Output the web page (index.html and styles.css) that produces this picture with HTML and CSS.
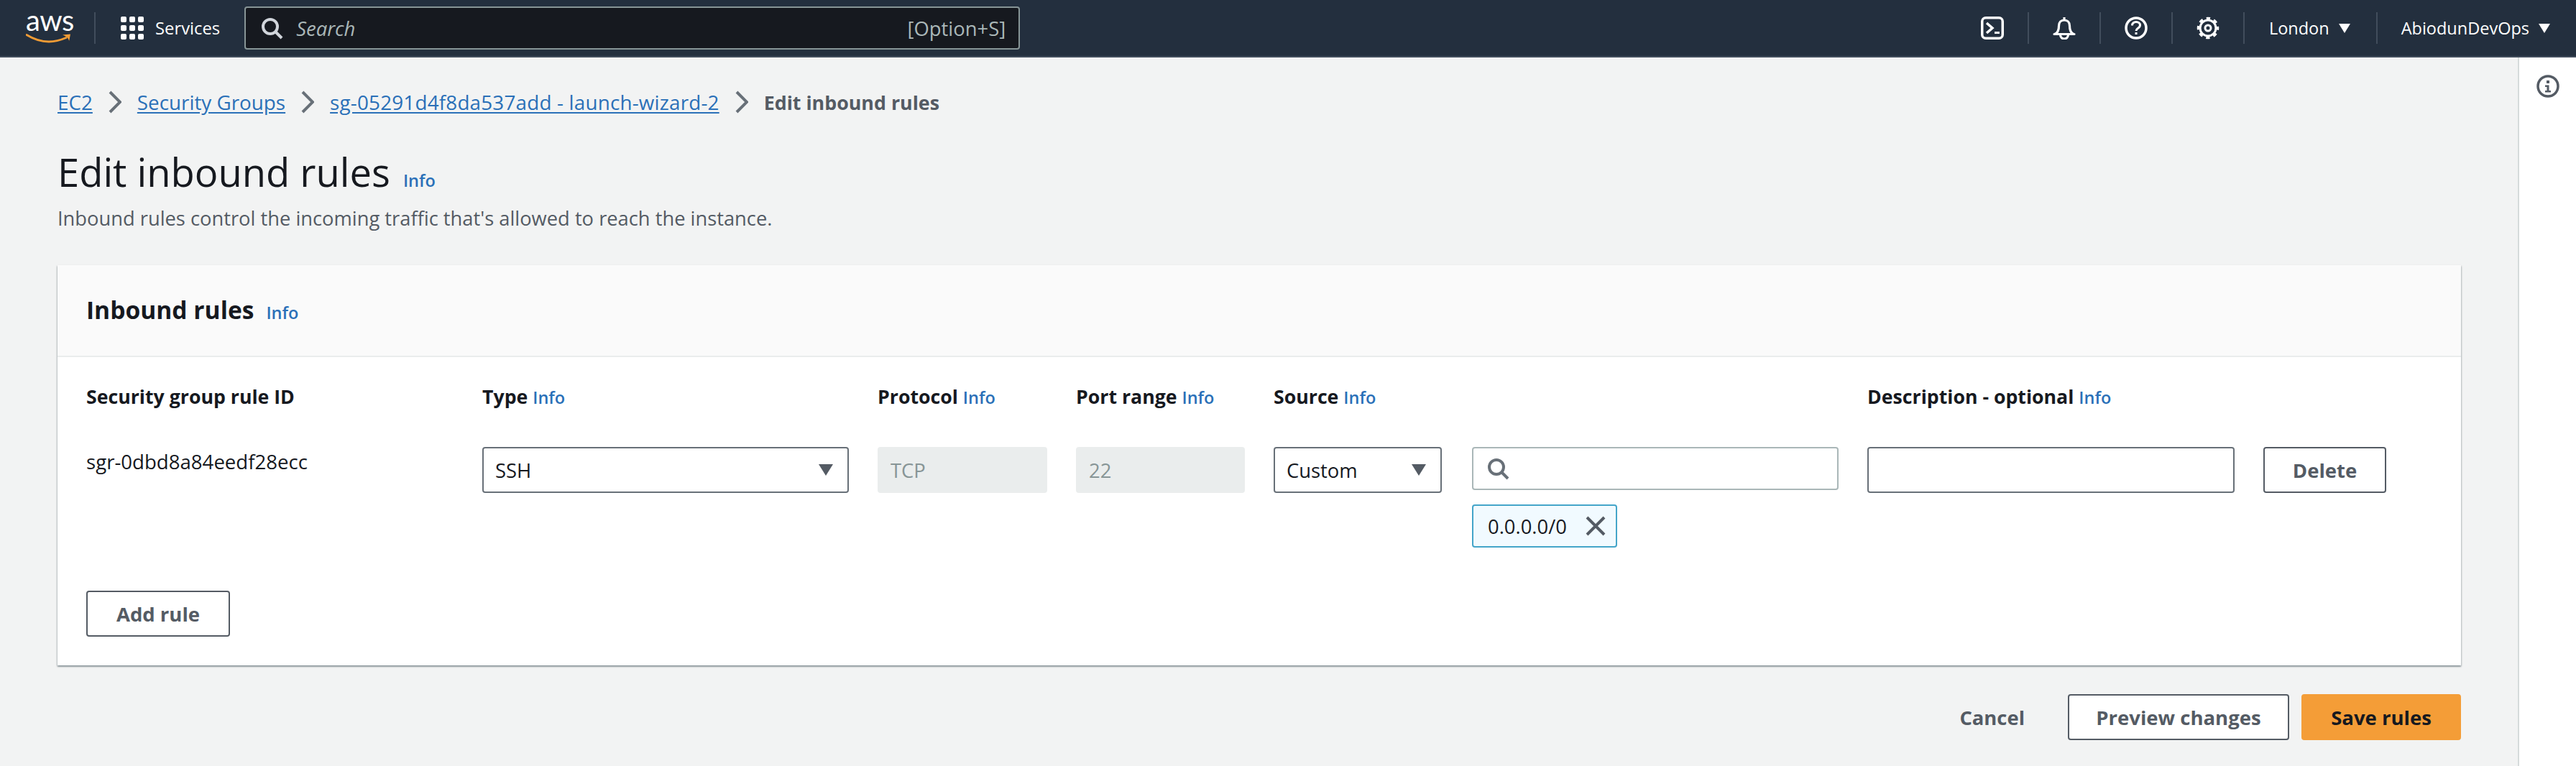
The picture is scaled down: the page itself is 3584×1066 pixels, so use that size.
FILE: index.html
```html
<!DOCTYPE html>
<html lang="en">
<head>
<meta charset="utf-8">
<title>Edit inbound rules</title>
<link rel="stylesheet" href="styles.css">
</head>
<body>
<header class="topnav">
  <div class="logo">
    <span class="logo-text">aws</span>
    <svg class="logo-smile" viewBox="0 0 64 14"><path d="M1 2.500C10 8 20 12 32 12c9 0 17-2.500 24-5.500" fill="none" stroke="#f29c35" stroke-width="2.800" stroke-linecap="round"/><path d="M51 2.500l11-1-1.800 9.500c-.8-3-2.500-6-9.200-8.500z" fill="#f29c35"/></svg>
  </div>
  <span class="nav-div nav-div-first"></span>
  <div class="services">
    <svg class="grid-icon" viewBox="0 0 32 32"><g fill="#fff"><rect x="0" y="0" width="8" height="8" rx="2"/><rect x="12" y="0" width="8" height="8" rx="2"/><rect x="24" y="0" width="8" height="8" rx="2"/><rect x="0" y="12" width="8" height="8" rx="2"/><rect x="12" y="12" width="8" height="8" rx="2"/><rect x="24" y="12" width="8" height="8" rx="2"/><rect x="0" y="24" width="8" height="8" rx="2"/><rect x="12" y="24" width="8" height="8" rx="2"/><rect x="24" y="24" width="8" height="8" rx="2"/></g></svg>
    <span class="services-text">Services</span>
  </div>
  <div class="searchbar">
    <svg class="icon-32" viewBox="0 0 32 32"><circle cx="14" cy="14" r="10" fill="none" stroke="#d1d5db" stroke-width="4"/><path d="M21 21l9 9" stroke="#d1d5db" stroke-width="4"/></svg>
    <span class="search-ph">Search</span>
    <span class="search-key">[Option+S]</span>
  </div>
  <div class="nav-right">
    <span class="nav-icon">
      <svg class="icon-32" viewBox="0 0 32 32"><rect x="1.750" y="1.750" width="28.500" height="28.500" rx="5" fill="none" stroke="#fff" stroke-width="3.500"/><path d="M8 9l8 7-8 7" fill="none" stroke="#fff" stroke-width="3.500"/><path d="M19 22.500h7" stroke="#fff" stroke-width="3"/></svg>
    </span>
    <span class="nav-div"></span>
    <span class="nav-icon">
      <svg class="icon-32" viewBox="0 0 32 32"><path d="M16 1v4M2 24.500c1.500 0 4-1.500 5.500-5 1-2.500 1-4 1-6.500 0-5 3-8 7.500-8s7.500 3 7.500 8c0 2.500 0 4 1 6.500 1.500 3.500 4 5 5.500 5z" fill="none" stroke="#fff" stroke-width="3.200" stroke-linejoin="round"/><path d="M10.500 25c0 3.500 2.500 6 5.500 6s5.500-2.500 5.500-6" fill="none" stroke="#fff" stroke-width="3.200"/></svg>
    </span>
    <span class="nav-div"></span>
    <span class="nav-icon">
      <svg class="icon-32" viewBox="0 0 32 32"><circle cx="16" cy="16" r="14" fill="none" stroke="#fff" stroke-width="3.500"/><path d="M10.500 12.500c0-3.300 2.500-5 5.500-5s5.500 1.800 5.500 4.600c0 2.200-1.400 3.200-2.900 4.200-1.500 1-2.600 1.900-2.600 3.700" fill="none" stroke="#fff" stroke-width="3"/><rect x="14.500" y="22" width="3" height="3" fill="#fff"/></svg>
    </span>
    <span class="nav-div"></span>
    <span class="nav-icon">
      <svg class="icon-32" viewBox="0 0 32 32"><circle cx="16" cy="16" r="11" fill="none" stroke="#fff" stroke-width="3"/><circle cx="16" cy="16" r="13.500" fill="none" stroke="#fff" stroke-width="3.500" stroke-dasharray="5.300 5.300" stroke-dashoffset="2.650"/><circle cx="16" cy="16" r="4" fill="none" stroke="#fff" stroke-width="3"/></svg>
    </span>
    <span class="nav-div"></span>
    <span class="nav-menu nav-menu-region"><span class="nav-label">London</span><span class="nav-caret"></span></span>
    <span class="nav-div"></span>
    <span class="nav-menu nav-menu-user"><span class="nav-label">AbiodunDevOps</span><span class="nav-caret"></span></span>
  </div>
</header>

<div class="layout">
  <main class="content">
    <nav class="breadcrumbs">
      <a class="crumb-link">EC2</a>
      <svg class="crumb-sep" viewBox="0 0 18 32"><path d="M2 2l14 14L2 30" fill="none" stroke="#687078" stroke-width="4"/></svg>
      <a class="crumb-link">Security Groups</a>
      <svg class="crumb-sep" viewBox="0 0 18 32"><path d="M2 2l14 14L2 30" fill="none" stroke="#687078" stroke-width="4"/></svg>
      <a class="crumb-link crumb-link-long">sg-05291d4f8da537add - launch-wizard-2</a>
      <svg class="crumb-sep" viewBox="0 0 18 32"><path d="M2 2l14 14L2 30" fill="none" stroke="#687078" stroke-width="4"/></svg>
      <span class="crumb-current">Edit inbound rules</span>
    </nav>

    <div class="page-head">
      <h1 class="page-title">Edit inbound rules</h1>
      <a class="info info-title">Info</a>
    </div>
    <p class="page-desc">Inbound rules control the incoming traffic that's allowed to reach the instance.</p>

    <section class="card">
      <div class="card-head">
        <h2 class="card-title">Inbound rules</h2>
        <a class="info info-card">Info</a>
      </div>
      <div class="card-body">
        <div class="rule-grid">
          <div class="col-label">Security group rule ID</div>
          <div class="col-label">Type <a class="info">Info</a></div>
          <div class="col-label">Protocol <a class="info">Info</a></div>
          <div class="col-label">Port range <a class="info">Info</a></div>
          <div class="col-label col-label-wide">Source <a class="info">Info</a></div>
          <div class="col-label">Description - optional <a class="info">Info</a></div>
          <div></div>

          <div class="rule-id">sgr-0dbd8a84eedf28ecc</div>
          <div class="select"><span>SSH</span><span class="caret"></span></div>
          <div class="field-disabled">TCP</div>
          <div class="field-disabled">22</div>
          <div class="select select-source"><span>Custom</span><span class="caret"></span></div>
          <div class="source-cell">
            <div class="cidr-input">
              <svg class="icon-32" viewBox="0 0 32 32"><circle cx="14" cy="14" r="10" fill="none" stroke="#687078" stroke-width="4"/><path d="M21 21l9 9" stroke="#687078" stroke-width="4"/></svg>
            </div>
            <div class="token"><span>0.0.0.0/0</span>
              <svg class="token-x" viewBox="0 0 28 28"><path d="M2 2l24 24M26 2L2 26" stroke="#545b64" stroke-width="4"/></svg>
            </div>
          </div>
          <div class="text-input"></div>
          <button class="btn btn-delete">Delete</button>
        </div>
        <button class="btn btn-add">Add rule</button>
      </div>
    </section>

    <footer class="actions">
      <button class="btn-link">Cancel</button>
      <button class="btn btn-preview">Preview changes</button>
      <button class="btn btn-primary">Save rules</button>
    </footer>
  </main>
  <aside class="side">
    <svg class="icon-32" viewBox="0 0 32 32"><circle cx="16" cy="16" r="14" fill="none" stroke="#545b64" stroke-width="3.500"/><rect x="14" y="8" width="4" height="4" fill="#545b64"/><path d="M12 14.500h5.500V22H20v2.500h-8V22h2.500v-5H12z" fill="#545b64"/></svg>
  </aside>
</div>
</body>
</html>
```

FILE: styles.css
```css
* { box-sizing: border-box; }
html, body { margin: 0; height: 1066px; overflow: hidden; }
body { font-family: "Open Sans", "Noto Sans", sans-serif; font-size: 27.400px; color: #16191f; background: #f2f3f3; }

.icon-32 { width: 32px; height: 32px; flex: none; display: block; }

/* top nav */
.topnav { height: 80px; background: #232f3e; border-bottom: 2px solid #414d5c; display: flex; align-items: center; color: #fff; padding-left: 36px; }
.logo { width: 62px; height: 56px; position: relative; flex: none; margin-top: -2px; }
.logo-text { display: block; font-family: "Lato", sans-serif; font-size: 40px; line-height: 36px; letter-spacing: -0.500px; text-align: center; color: #fff; }
.logo-smile { display: block; width: 64px; height: 14px; margin-top: 0; }
.nav-div { width: 2px; height: 44px; background: #414d5c; flex: none; }
.nav-div-first { margin-left: 33px; }
.services { display: flex; align-items: center; margin-left: 35px; flex: none; }
.grid-icon { width: 32px; height: 32px; display: block; }
.services-text { margin-left: 16px; font-size: 23.800px; font-weight: 500; }
.searchbar { margin-left: 34px; width: 1079px; height: 60px; background: #16191f; border: 2px solid #879596; border-radius: 4px; display: flex; align-items: center; padding: 0 18px 0 20px; flex: none; }
.search-ph { margin-left: 18px; font-style: italic; color: #aab7b8; font-size: 27.500px; }
.search-key { margin-left: auto; color: #aab7b8; font-size: 27.400px; }
.nav-right { margin-left: auto; display: flex; align-items: center; padding-right: 36px; }
.nav-icon { width: 98px; display: flex; justify-content: center; }
.nav-menu { display: flex; align-items: center; font-size: 23.500px; font-weight: 500; }
.nav-menu-region { padding: 0 36px 0 34px; }
.nav-menu-user { padding-left: 33px; }
.nav-caret { width: 0; height: 0; margin-left: 13px; border-left: 8px solid transparent; border-right: 8px solid transparent; border-top: 13px solid #fff; }

/* layout */
.layout { display: flex; height: 986px; }
.content { flex: 1; padding: 0 79px 0 80px; min-width: 0; }
.side { width: 81px; background: #fff; border-left: 2px solid #d5dbdb; display: flex; justify-content: center; padding-top: 24px; flex: none; }

/* breadcrumbs */
.breadcrumbs { display: flex; align-items: center; height: 40px; margin-top: 42px; font-size: 27.800px; }
.crumb-link { color: #2a70b8; text-decoration: underline; text-underline-offset: 3px; }
.crumb-link-long { letter-spacing: 0.200px; }
.crumb-sep { width: 18px; height: 32px; margin: 0 22px; flex: none; }
.crumb-current { color: #545b64; font-weight: 700; font-size: 26.800px; }

/* page head */
.page-head { display: flex; align-items: baseline; margin-top: 43px; }
.page-title { margin: 0; font-size: 54.300px; line-height: 68px; font-weight: 500; }
.info { color: #2a70b8; font-size: 23.500px; font-weight: 600; }
.info-title { margin-left: 18px; }
.page-desc { margin: 12px 0 0; font-size: 27.300px; line-height: 38px; color: #545b64; }

/* card */
.card { margin-top: 46px; height: 557px; background: #fff; box-shadow: 0 2px 2px rgba(0,28,36,.3), 1px 1px 2px rgba(0,28,36,.15), -1px 1px 2px rgba(0,28,36,.15); }
.card-head { height: 128px; background: #fafafa; border-bottom: 2px solid #eaeded; display: flex; align-items: baseline; padding: 40px 40px 0; }
.card-title { margin: 0; font-size: 33.600px; line-height: 44px; font-weight: 700; }
.info-card { margin-left: 17px; }
.card-body { padding: 37px 40px 0; }
.rule-grid { display: grid; grid-template-columns: 511px 510px 236px 235px 236px 510px 511px 171px; column-gap: 40px; grid-template-rows: 36px auto; row-gap: 52px; }
.col-label { font-weight: 700; font-size: 26.700px; line-height: 36px; white-space: nowrap; }
.col-label-wide { grid-column: span 2; }
.rule-id { font-size: 27.600px; line-height: 36px; padding-top: 2px; }
.select { height: 64px; border: 2px solid #687078; border-radius: 4px; display: flex; align-items: center; justify-content: space-between; padding: 0 20px 0 16px; }
.select-source { width: 234px; }
.caret { width: 0; height: 0; border-left: 10px solid transparent; border-right: 10px solid transparent; border-top: 16px solid #545b64; }
.field-disabled { height: 64px; background: #eaeded; border-radius: 4px; color: #879596; display: flex; align-items: center; padding: 0 18px; }
.source-cell { display: flex; flex-direction: column; align-items: flex-start; gap: 20px; }
.cidr-input { width: 100%; height: 60px; border: 2px solid #aab7b8; border-radius: 4px; display: flex; align-items: center; padding: 0 18px; }
.token { width: 202px; height: 60px; background: #f1faff; border: 2px solid #44a5c9; border-radius: 4px; display: flex; align-items: center; justify-content: space-between; padding: 0 14px 0 20px; }
.token-x { width: 28px; height: 28px; display: block; flex: none; }
.text-input { height: 64px; border: 2px solid #687078; border-radius: 4px; }
.btn { font-family: inherit; font-size: 27.500px; font-weight: 700; height: 64px; border-radius: 4px; border: 2px solid #545b64; background: #fff; color: #545b64; padding: 0; cursor: pointer; display: block; }
.btn-delete { width: 171px; }
.btn-add { width: 200px; margin-top: 60px; }

/* footer */
.actions { display: flex; justify-content: flex-end; align-items: center; margin-top: 40px; }
.btn-link { font-family: inherit; font-size: 27.400px; font-weight: 700; color: #545b64; background: none; border: 0; padding: 0; margin-right: 60px; }
.btn-preview { width: 308px; margin-right: 17px; }
.btn-primary { width: 222px; background: #f49d37; border-color: #f49d37; color: #16191f; }
```
